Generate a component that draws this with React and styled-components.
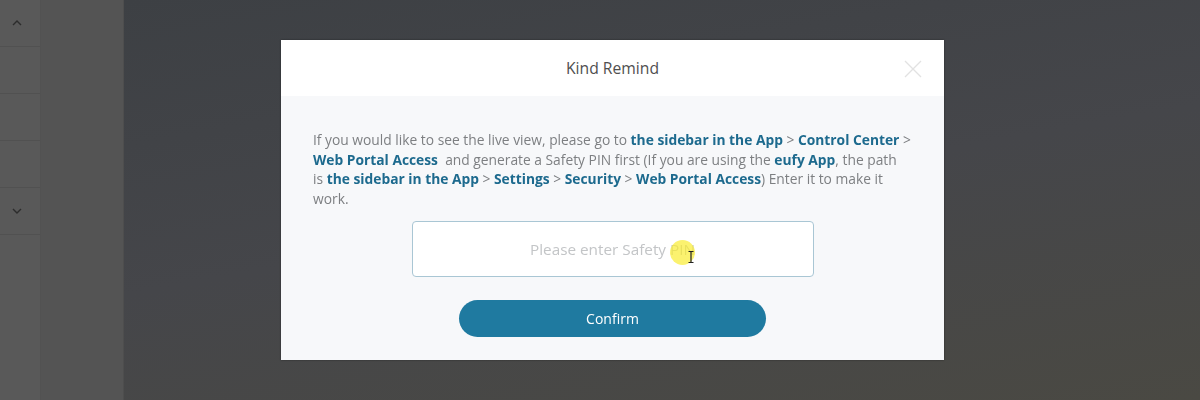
import React from 'react';
import styled, { createGlobalStyle } from 'styled-components';

const GlobalStyle = createGlobalStyle`
    html, body {
        margin: 0;
        padding: 0;
        width: 1200px;
        height: 400px;
        overflow: hidden;
        font-family: "Open Sans", "Noto Sans", sans-serif;
    }
`;

const Page = styled.div`
    display: flex;
    width: 1200px;
    height: 400px;
`;

const Rail = styled.div`
    width: 40px;
    background: #595959;
    border-right: 1px solid #525252;
    display: flex;
    flex-direction: column;
`;

const RailCell = styled.div`
    height: 46px;
    padding-right: 6px;
    border-bottom: 1px solid #515151;
    display: flex;
    align-items: center;
    justify-content: center;
`;

const Panel = styled.div`
    width: 82px;
    background: #545454;
    border-right: 1px solid #4e4e4e;
`;

const Main = styled.div`
    flex: 1;
    background: linear-gradient(170deg, #3d4044 0%, #45464a 50%, #4a4943 100%);
`;

const Overlay = styled.div`
    position: fixed;
    inset: 0;
    display: flex;
    align-items: flex-start;
`;

const Modal = styled.div`
    margin: 40px 0 0 281px;
    width: 663px;
    height: 320px;
    background: #f7f8fa;
    display: flex;
    flex-direction: column;
    box-shadow: 0 0 2px rgba(0, 0, 0, 0.4);
`;

const Header = styled.div`
    position: relative;
    height: 56px;
    background: #ffffff;
    display: flex;
    align-items: center;
    justify-content: center;
`;

const Title = styled.h3`
    margin: 0 0 1px;
    font-size: 15.7px;
    font-weight: 400;
    color: #4f4f4f;
`;

const Close = styled.button`
    position: absolute;
    right: 22px;
    top: 20px;
    width: 18px;
    height: 18px;
    padding: 0;
    border: 0;
    background: none;
    display: flex;
    align-items: center;
    justify-content: center;
`;

const Body = styled.div`
    padding: 34px 31px 0 32px;
    display: flex;
    flex-direction: column;
    align-items: center;
`;

const Text = styled.p`
    margin: 0;
    align-self: stretch;
    font-size: 13.8px;
    line-height: 19.7px;
    color: #7d7f82;
`;

const Strong = styled.b`
    color: #1d6a8e;
    font-weight: 700;
`;

const Field = styled.div`
    position: relative;
    margin: 12px 1px 0 0;
    width: 402px;
`;

const Input = styled.input`
    box-sizing: border-box;
    width: 100%;
    height: 56px;
    border: 1px solid #a9c6d4;
    border-radius: 4px;
    background: #ffffff;
    text-align: center;
    font-family: inherit;
    font-size: 15.3px;
    color: #333;
    outline: none;
    &::placeholder {
        color: #c3c5c7;
    }
`;

const Highlight = styled.span`
    position: absolute;
    left: 258px;
    top: 19px;
    width: 25px;
    height: 25px;
    border-radius: 50%;
    background: rgba(250, 236, 50, 0.7);
    pointer-events: none;
`;

const Cursor = styled.svg`
    position: absolute;
    left: 276px;
    top: 30px;
    pointer-events: none;
`;

const Confirm = styled.button`
    margin: 23px 1px 0 0;
    width: 307px;
    height: 37px;
    border: 0;
    border-radius: 19px;
    background: #1f7aa0;
    color: #ffffff;
    font-family: inherit;
    font-size: 14px;
`;

const Chevron = ({ up }) => (
    <svg width="10" height="6" viewBox="0 0 10 6">
        <path
            d={up ? 'M1 5 L5 1 L9 5' : 'M1 1 L5 5 L9 1'}
            fill="none"
            stroke="#2c2c2c"
            strokeWidth="1.4"
        />
    </svg>
);

const App = () => {
    return (
        <>
            <GlobalStyle />
            <Page>
                <Rail>
                    <RailCell><Chevron up /></RailCell>
                    <RailCell />
                    <RailCell />
                    <RailCell />
                    <RailCell><Chevron /></RailCell>
                </Rail>
                <Panel />
                <Main />
            </Page>
            <Overlay>
                <Modal>
                    <Header>
                        <Title>Kind Remind</Title>
                        <Close aria-label="close">
                            <svg width="18" height="18" viewBox="0 0 18 18">
                                <path d="M1 1 L17 17 M17 1 L1 17" stroke="#e2e2e2" strokeWidth="1.3" />
                            </svg>
                        </Close>
                    </Header>
                    <Body>
                        <Text>
                            If you would like to see the live view, please go to <Strong>the sidebar in the App</Strong> &gt; <Strong>Control Center</Strong> &gt;{' '}
                            <Strong>Web Portal Access</Strong>&nbsp; and generate a Safety PIN first (If you are using the <Strong>eufy App</Strong>, the path
                            <br />
                            is <Strong>the sidebar in the App</Strong> &gt; <Strong>Settings</Strong> &gt; <Strong>Security</Strong> &gt; <Strong>Web Portal Access</Strong>) Enter it to make it
                            <br />
                            work.
                        </Text>
                        <Field>
                            <Input placeholder="Please enter Safety PIN" />
                            <Highlight />
                            <Cursor width="6" height="12" viewBox="0 0 6 12">
                                <path d="M0.5 0.5 H5.5 M3 0.5 V11.5 M0.5 11.5 H5.5" stroke="#222" strokeWidth="1.2" fill="none" />
                            </Cursor>
                        </Field>
                        <Confirm>Confirm</Confirm>
                    </Body>
                </Modal>
            </Overlay>
        </>
    );
};

export default App;
